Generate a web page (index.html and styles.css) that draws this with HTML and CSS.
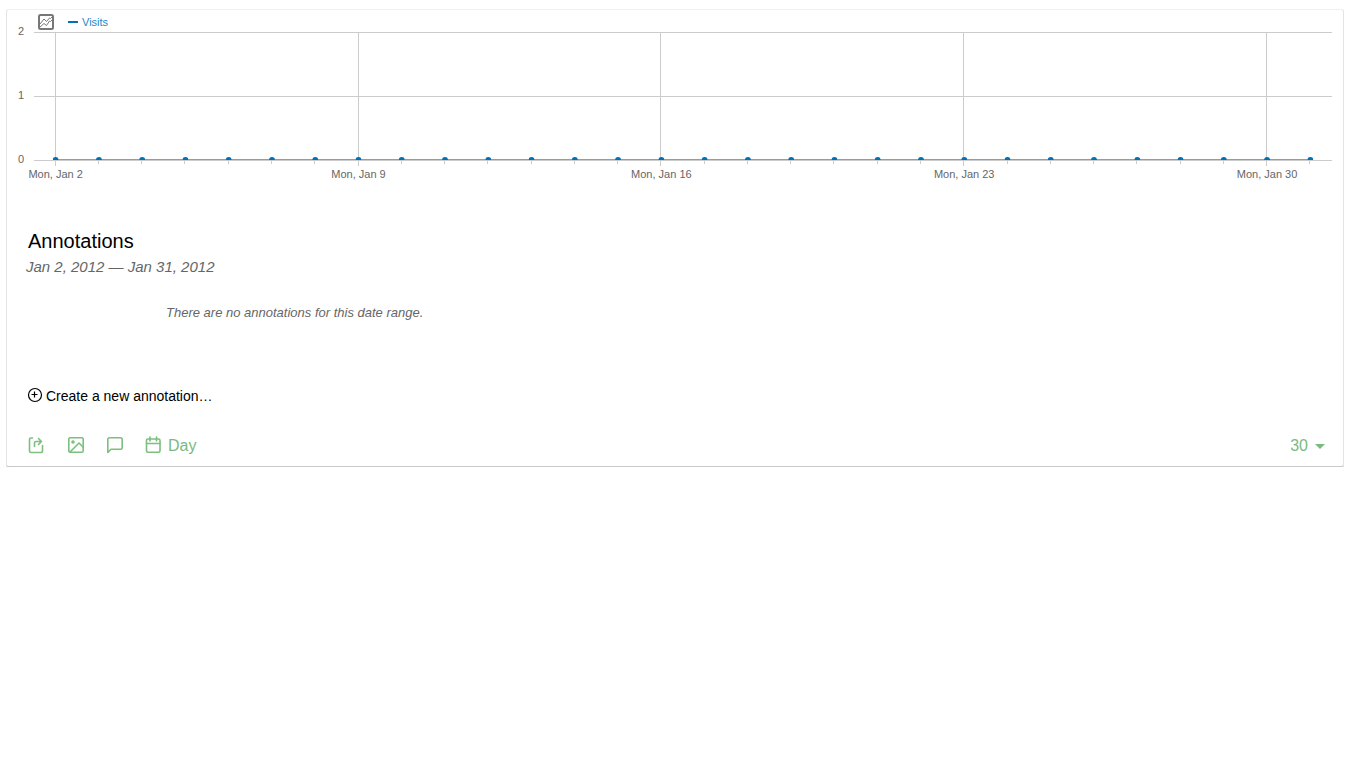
FILE: index.html
```html
<!DOCTYPE html>
<html lang="en">
<head>
<meta charset="utf-8">
<title>Visits</title>
<link rel="stylesheet" href="styles.css">
</head>
<body>
<main class="card">
  <div class="legend">
    <button class="picker" type="button" aria-label="Choose metrics">
      <svg width="16" height="16" viewBox="0 0 16 16" fill="none"><rect x="1" y="1" width="14" height="14" rx="1.5" stroke="#777" stroke-width="2"/><path d="M2 10 6 5l2.500 2.500L11.500 4l1 .5L14 3M2 13l4-3.500 2.500 2L11.500 7l1 .5L14 6" stroke="#777"/></svg>
    </button>
    <span class="series-line"></span>
    <span class="series">Visits</span>
  </div>
  <svg class="plot" role="img" aria-label="Visits per day"></svg>
  <section class="annotations">
    <h1 class="title">Annotations</h1>
    <p class="range">Jan 2, 2012 — Jan 31, 2012</p>
    <p class="empty">There are no annotations for this date range.</p>
    <a class="create" href="#">
      <svg width="16" height="16" viewBox="0 0 16 16" fill="none" stroke="#000" stroke-width="1.200"><circle cx="8" cy="8" r="6.500"/><path d="M7.500 4.500v6M4.500 7.500h6"/></svg>
      Create a new annotation…
    </a>
  </section>
  <footer class="tools">
    <a class="tool" href="#" aria-label="Export"><svg width="19" height="18" viewBox="0 0 19 18"><path d="M5.500 2H4A1.500 1.500 0 0 0 2.500 3.500V15A1.500 1.500 0 0 0 4 16.500h10a1.500 1.500 0 0 0 1.500-1.500V9.500M7.500 10.500V7a1.500 1.500 0 0 1 1.500-1.500h5.500M11.500 2.500l3 3-3 3"/></svg></a>
    <a class="tool" href="#" aria-label="Image"><svg width="18" height="18" viewBox="0 0 18 18"><rect x="1.800" y="1.800" width="14.400" height="14.400" rx="1.500"/><circle class="sun" cx="6" cy="6" r="1"/><path d="m16 11-4-4-9 9"/></svg></a>
    <a class="tool" href="#" aria-label="Annotations"><svg width="18" height="18" viewBox="0 0 18 18"><path d="M1.800 16.500v-13a1.700 1.700 0 0 1 1.700-1.700h11a1.700 1.700 0 0 1 1.700 1.700v8a1.700 1.700 0 0 1-1.700 1.700H5z"/></svg></a>
    <a class="tool" href="#"><svg width="18" height="18" viewBox="0 0 18 18"><rect x="1.500" y="3" width="13.500" height="13.200" rx="1.500"/><path d="M1.500 7.500H15M5 1v4M11.500 1v4"/></svg><span>Day</span></a>
    <button class="limit" type="button">30<span class="caret"></span></button>
  </footer>
</main>
<script src="chart.js"></script>
</body>
</html>
```
FILE: styles.css
```css
body {
  margin: 9px 6px;
  background: #fff;
  font-family: "Liberation Sans", Arial, sans-serif;
}

.card {
  border: 1px solid #e4e4e4;
  border-top-color: #f0f0f0;
  border-bottom-color: #c9c9c9;
  border-radius: 3px;
  background: #fff;
  box-shadow: 0 1px 2px rgba(0, 0, 0, .2);
}

.legend {
  display: flex;
  align-items: center;
  height: 22px;
  padding: 2px 0 0 31px;
  box-sizing: border-box;
  font-size: 11px;
  color: #1e88c7;
}

.picker {
  display: flex;
  margin: 0 14px 0 0;
  padding: 0;
  border: 0;
  background: none;
}

.series-line {
  width: 10px;
  height: 2px;
  margin-right: 4px;
  background: #0071b5;
}

.plot {
  display: block;
  width: calc(100% - 38px);
  height: 150px;
  margin-left: 27px;
  overflow: visible;
}

.grid {
  stroke: #ccc;
  shape-rendering: crispEdges;
}

.data-line {
  fill: #5eacd8;
}

.dot {
  fill: #0071b5;
}

.axis-text {
  fill: #666;
  font-size: 11px;
  text-anchor: middle;
}

.annotations {
  padding: 46px 20px 0;
}

.title {
  margin: 0;
  padding-left: 1px;
  font-size: 20px;
  font-weight: 400;
  line-height: 26px;
  color: #000;
}

.range {
  margin: 0 0 24px -1px;
  font-size: 15px;
  font-style: italic;
  line-height: 26px;
  color: #666;
}

.empty {
  margin: 0 0 65px 139px;
  font-size: 13px;
  font-style: italic;
  line-height: 18px;
  color: #666;
}

.create {
  display: inline-flex;
  align-items: center;
  gap: 3px;
  height: 18px;
  font-size: 14px;
  color: #000;
  text-decoration: none;
}

.create svg {
  margin-bottom: 2px;
}

.tools {
  display: flex;
  align-items: center;
  gap: 21px;
  height: 40px;
  padding: 19px 18px 0 20px;
  font-size: 16px;
}

.tool,
.limit {
  display: flex;
  align-items: center;
  color: #7cb97f;
  text-decoration: none;
}

.tool svg {
  margin-bottom: 3px;
  fill: none;
  stroke: #7cbf7f;
  stroke-width: 1.6;
  stroke-linecap: round;
  stroke-linejoin: round;
}

.tool .sun {
  fill: #7cbf7f;
}

.tool span {
  margin-left: 5px;
}

.limit {
  gap: 7px;
  margin-left: auto;
  padding: 0;
  border: 0;
  background: none;
  font: inherit;
}

.caret {
  border: 5px solid transparent;
  border-top-color: #7cb97f;
  border-bottom: 0;
}
```
FILE: chart.js
```js
const plot = document.querySelector('.plot');
const days = 30;
const baseline = 128;

function add(name, attributes, text) {
  const el = document.createElementNS('http://www.w3.org/2000/svg', name);
  for (const [key, value] of Object.entries(attributes)) el.setAttribute(key, value);
  if (text !== undefined) el.textContent = text;
  plot.append(el);
}

const center = day => `${(day + 0.5) / days * 100}%`;

[2, 1, 0].forEach((value, row) => {
  const y = row * 64;
  add('rect', { x: 0, y, width: '100%', height: 1, fill: '#ccc' });
  add('text', { class: 'axis-text', x: -13, y: y + 3 }, value);
});

for (let day = 0; day < days; day++) {
  const x = center(day);
  const major = day % 7 === 0;
  add('line', { class: 'grid', x1: x, x2: x, y1: major ? 0 : baseline, y2: baseline + (major ? 6 : 4), transform: 'translate(-0.5)' });
  if (major) add('text', { class: 'axis-text', x, y: baseline + 18 }, `Mon, Jan ${day + 2}`);
}

add('rect', { class: 'data-line', x: center(0), y: baseline - 1, width: `${(days - 1) / days * 100}%`, height: 1 });
for (let day = 0; day < days; day++) {
  add('circle', { class: 'dot', cx: center(day), cy: baseline, r: 3, 'clip-path': 'inset(0 0 3px 0)' });
}
```
